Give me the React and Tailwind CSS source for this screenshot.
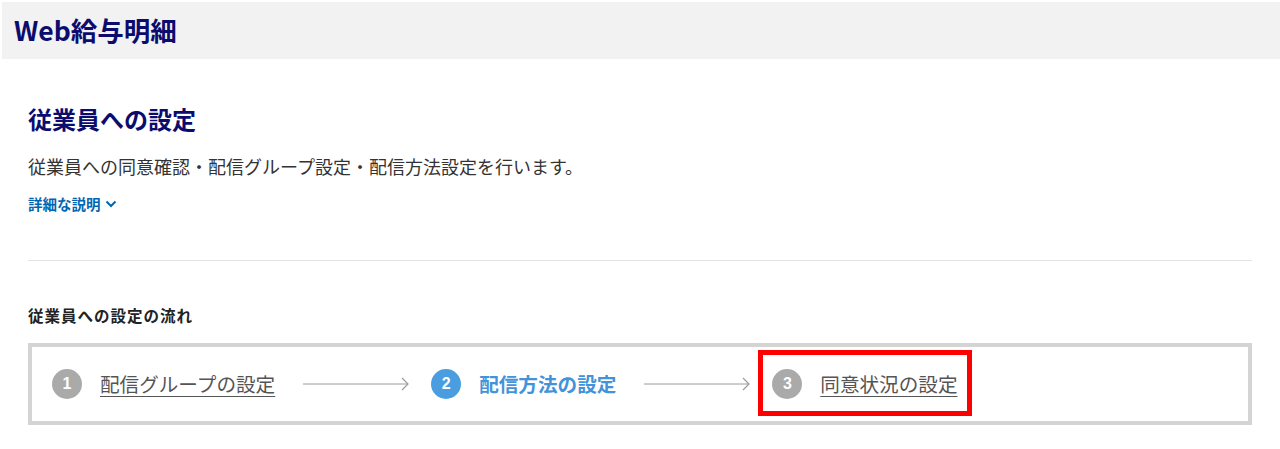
import React from "react";

const Step = ({ num, label, active }) => {
  return (
    <div className="flex h-[30px] items-center">
      <span
        className={
          "flex h-[30px] w-[30px] shrink-0 items-center justify-center rounded-full text-[16px] font-bold text-white " +
          (active ? "bg-[#4a9ee0]" : "bg-[#aaaaaa]")
        }
        style={{ fontFamily: "'Liberation Sans', Arial, sans-serif" }}
      >
        {num}
      </span>
      {active ? (
        <span className="ml-[18px] text-[19.6px] font-bold leading-[30px] text-[#4293da]">{label}</span>
      ) : (
        <a href="#" className="ml-[18px] text-[19.6px] leading-[30px] text-[#555555] underline underline-offset-[4px]">
          {label}
        </a>
      )}
    </div>
  );
};

const Arrow = () => (
  <svg width="106" height="14" viewBox="0 0 106 14" className="ml-[28px] mr-[22px] shrink-0">
    <line x1="0" y1="7" x2="105" y2="7" stroke="#9a9a9a" strokeWidth="1" />
    <polyline points="99,1 105,7 99,13" fill="none" stroke="#9a9a9a" strokeWidth="1.2" />
  </svg>
);

export default function App() {
  return (
    <div
      className="min-h-[449px] bg-white text-[#333333]"
      style={{ fontFamily: "'Noto Sans CJK JP', 'Noto Sans', sans-serif" }}
    >
      {/* Header */}
      <header className="ml-[2px] pt-[2px]">
        <div className="flex h-[57px] items-center bg-[#f2f2f2] pl-[12px]">
          <h1 className="text-[26.5px] font-bold leading-none text-[#0c0c6e]">Web給与明細</h1>
        </div>
      </header>

      <main className="px-[28px]">
        {/* Intro */}
        <section className="border-b border-[#e3e3e3] pb-[46px] pt-[44px]">
          <h2 className="text-[24px] font-bold leading-[32px] text-[#0c0c6e]">従業員への設定</h2>
          <p className="mt-[18px] text-[18px] leading-[26px] text-[#333333]">
            従業員への同意確認・配信グループ設定・配信方法設定を行います。
          </p>
          <button className="mt-[15px] flex items-center gap-[4px] text-[14.5px] font-bold leading-[20px] text-[#0066b3]">
            詳細な説明
            <svg width="12" height="12" viewBox="0 0 12 12">
              <polyline points="1.5,3.5 6,8 10.5,3.5" fill="none" stroke="#0066b3" strokeWidth="2" />
            </svg>
          </button>
        </section>

        {/* Flow */}
        <section className="pt-[43px]">
          <h3 className="text-[15.5px] font-bold leading-[22px] tracking-[1px] text-[#222222]">
            従業員への設定の流れ
          </h3>
          <div className="mt-[17px] flex h-[82px] items-center border-4 border-[#d4d4d4] pl-[20px]">
            <Step num="1" label="配信グループの設定" />
            <Arrow />
            <Step num="2" label="配信方法の設定" active />
            <Arrow />
            <div className="relative">
              <Step num="3" label="同意状況の設定" />
              <div className="pointer-events-none absolute -bottom-[17px] -left-[14px] -right-[15px] -top-[19px] border-[5px] border-[#ff0000]" />
            </div>
          </div>
        </section>
      </main>
    </div>
  );
}
